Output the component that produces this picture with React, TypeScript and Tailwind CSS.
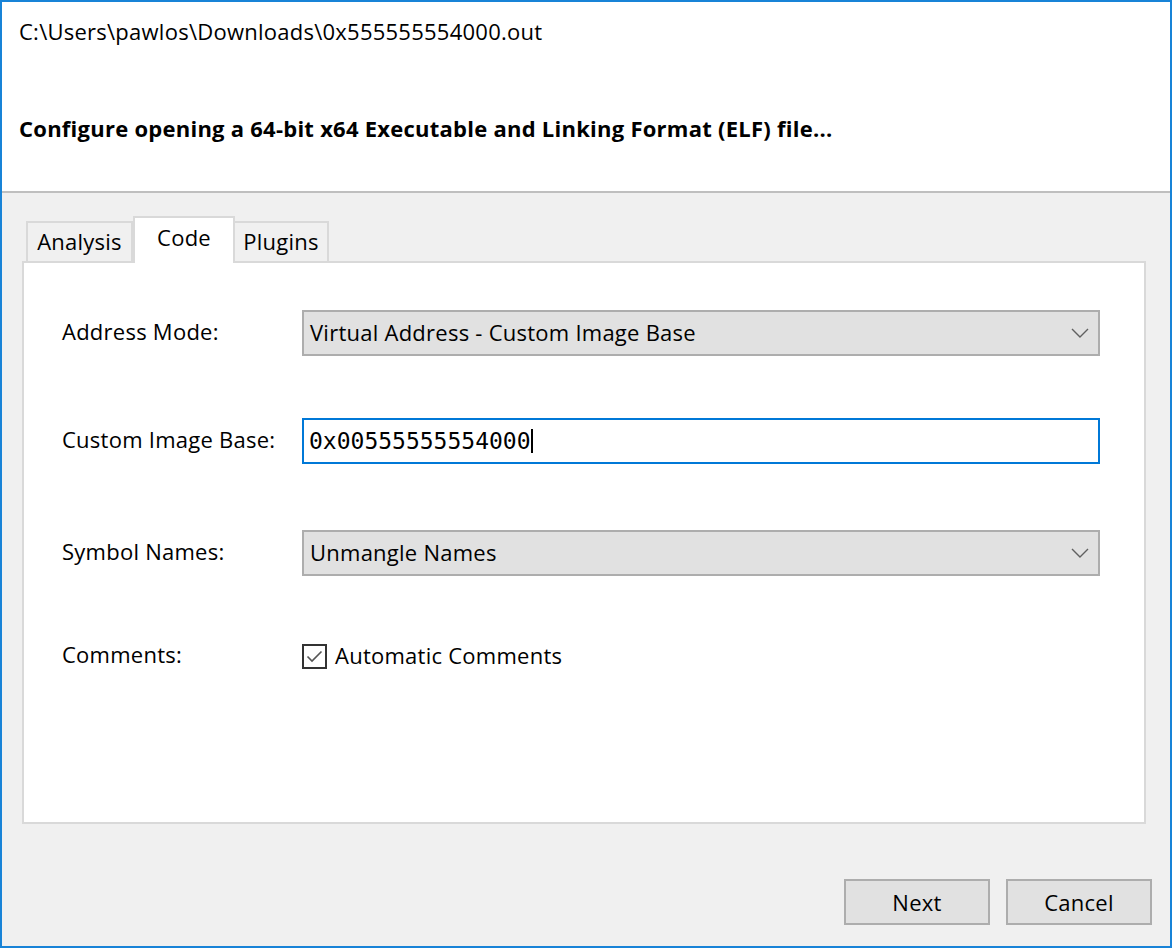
const ui = "font-['Open_Sans','Noto_Sans',sans-serif] tracking-[0.25px]";

function Dropdown({ value }: { value: string }) {
  return (
    <div className="flex h-[46px] w-[798px] items-center justify-between border-2 border-[#adadad] bg-[#e1e1e1] pb-[1px] pl-[6px] pr-[9px] text-[22px] text-black">
      <span>{value}</span>
      <svg width="18" height="10" viewBox="0 0 18 10" fill="none">
        <path d="M1 1 L9 9 L17 1" stroke="#606060" strokeWidth="1.4" />
      </svg>
    </div>
  );
}

function Row({ label, children, className }: { label: string; children: React.ReactNode; className?: string }) {
  return (
    <div className={`flex items-center ${className ?? ""}`}>
      <div className="w-[240px] pb-[4px] text-[22px] text-black">{label}</div>
      {children}
    </div>
  );
}

export default function App() {
  return (
    <div className={`flex h-[948px] w-[1172px] flex-col border-2 border-[#1883d7] bg-[#f0f0f0] ${ui}`}>
      {/* Header */}
      <div className="flex h-[191px] flex-col border-b-2 border-[#bfbfbf] bg-white pl-[17px]">
        <p className="mt-[15px] text-[22px] leading-[28px] text-black">
          C:\Users\pawlos\Downloads\0x555555554000.out
        </p>
        <p className="mt-[69px] text-[22px] font-bold leading-[28px] text-black">
          Configure opening a 64-bit x64 Executable and Linking Format (ELF) file...
        </p>
      </div>

      {/* Tabs + panel */}
      <div className="ml-[20px] mr-[24px] mt-[23px] flex flex-col">
        <div className="flex h-[45px] items-end pl-[4px]">
          <div className="-mb-[2px] flex h-[42px] w-[107px] items-center justify-center border-2 border-b-0 border-[#d9d9d9] bg-[#f0f0f0] pb-[4px] text-[22px]">
            Analysis
          </div>
          <div className="relative z-10 -mb-[2px] flex h-[47px] w-[102px] items-start justify-center border-2 border-b-0 border-[#d9d9d9] bg-white pt-[3px] text-[22px]">
            Code
          </div>
          <div className="-mb-[2px] flex h-[42px] w-[94px] items-center justify-center border-2 border-b-0 border-l-0 border-[#d9d9d9] bg-[#f0f0f0] pb-[4px] text-[22px]">
            Plugins
          </div>
        </div>
        <div className="flex h-[563px] flex-col border-2 border-[#d9d9d9] bg-white pl-[38px] pt-[47px]">
          <Row label="Address Mode:">
            <Dropdown value="Virtual Address - Custom Image Base" />
          </Row>
          <Row label="Custom Image Base:" className="mt-[62px]">
            <div className="flex h-[46px] w-[798px] items-center border-2 border-[#0078d7] bg-white pl-[5px]">
              <span className="font-['DejaVu_Sans_Mono',monospace] text-[23px] tracking-normal text-black">0x00555555554000</span>
              <span className="h-[24px] w-[2px] bg-black" />
            </div>
          </Row>
          <Row label="Symbol Names:" className="mt-[66px]">
            <Dropdown value="Unmangle Names" />
          </Row>
          <Row label="Comments:" className="mt-[62px]">
            <div className="flex items-center gap-[8px] text-[22px] text-black">
              <span className="flex h-[25px] w-[25px] items-center justify-center border-2 border-[#333333] bg-white">
                <svg width="17" height="13" viewBox="0 0 17 13" fill="none">
                  <path d="M1.5 6.5 L6 11 L15.5 1.5" stroke="#555" strokeWidth="1.6" />
                </svg>
              </span>
              <span className="pb-[3px]">Automatic Comments</span>
            </div>
          </Row>
        </div>
      </div>

      {/* Buttons */}
      <div className="mr-[18px] mt-[55px] flex justify-end gap-[16px]">
        <button className="h-[46px] w-[146px] border-2 border-[#adadad] bg-[#e1e1e1] text-[22px] text-black">
          Next
        </button>
        <button className="h-[46px] w-[146px] border-2 border-[#adadad] bg-[#e1e1e1] text-[22px] text-black">
          Cancel
        </button>
      </div>
    </div>
  );
}
